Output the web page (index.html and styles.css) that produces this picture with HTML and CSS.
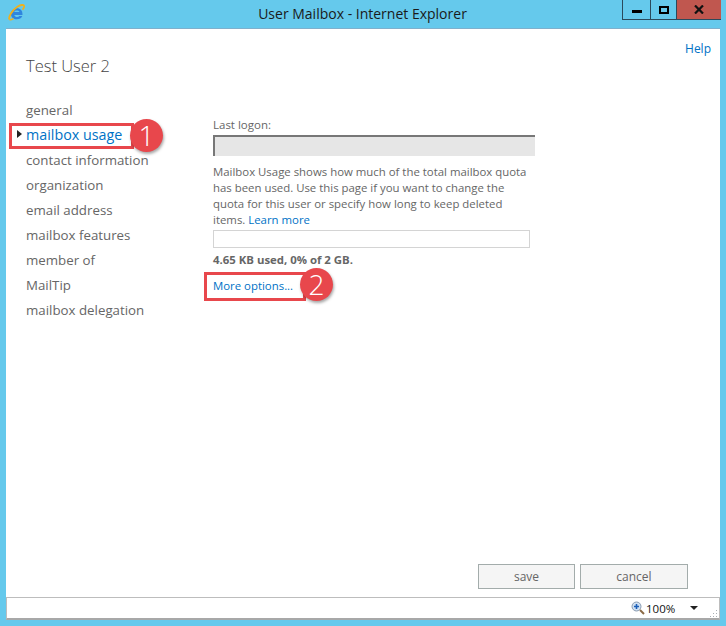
FILE: index.html
```html
<!DOCTYPE html>
<html lang="en">
<head>
<meta charset="utf-8">
<title>User Mailbox - Internet Explorer</title>
<link rel="stylesheet" href="styles.css">
</head>
<body>
<div class="window">
  <header class="titlebar">
    <svg class="ie-logo" viewBox="0 0 20 20" width="17" height="17" aria-hidden="true">
      <path d="M17 11.800c.2-3.700-2.500-6.800-6.500-6.800-4.200 0-7 3.100-7 6.800 0 4.200 3.100 6.200 6.800 6.200 3.100 0 5.600-1.300 6.500-3.900h-3.400c-1.300 1.700-5.200 1.600-6-1.300H17z M7.300 9.400c.9-2.200 5.300-2.200 6.200 0z" fill="#2f86de" fill-rule="evenodd"/>
      <path d="M1.500 18C.5 15 5 7 11 3.200c4-2.400 7.200-2.600 7.800-1.200.6 1.200-.3 3-1.700 4.800" fill="none" stroke="#eeb11f" stroke-width="2.200"/>
      <path d="M1.500 18c.7 1 2.700.5 5-.8" fill="none" stroke="#eeb11f" stroke-width="1.800"/>
    </svg>
    <div class="title">User Mailbox - Internet Explorer</div>
    <div class="controls">
      <div class="ctl ctl-min"><span class="min-glyph"></span></div>
      <div class="ctl ctl-max"><span class="max-glyph"></span></div>
      <div class="ctl ctl-close">
        <svg viewBox="0 0 10 9" width="10" height="9" aria-hidden="true"><path d="M1 .5l8 8M9 .5l-8 8" stroke="#111" stroke-width="2.200"/></svg>
      </div>
    </div>
  </header>

  <main class="page">
    <div class="help-row"><a class="link help">Help</a></div>
    <h1 class="user">Test User 2</h1>
    <div class="columns">
      <nav class="nav">
        <div class="nav-item">general</div>
        <div class="nav-item active"><span class="caret"></span>mailbox usage<span class="mark mark-1"></span><span class="badge badge-1">1</span></div>
        <div class="nav-item">contact information</div>
        <div class="nav-item">organization</div>
        <div class="nav-item">email address</div>
        <div class="nav-item">mailbox features</div>
        <div class="nav-item">member of</div>
        <div class="nav-item">MailTip</div>
        <div class="nav-item">mailbox delegation</div>
      </nav>
      <section class="detail">
        <div class="label">Last logon:</div>
        <div class="readonly"></div>
        <p class="desc">Mailbox Usage shows how much of the total mailbox quota has been used. Use this page if you want to change the quota for this user or specify how long to keep deleted items. <a class="link">Learn more</a></p>
        <div class="usage-bar"></div>
        <div class="usage-text">4.65 KB used, 0% of 2 GB.</div>
        <div class="more"><a class="link">More options...</a><span class="mark mark-2"></span><span class="badge badge-2">2</span></div>
      </section>
    </div>
    <div class="actions">
      <button class="btn btn-save">save</button>
      <button class="btn btn-cancel">cancel</button>
    </div>
  </main>

  <footer class="statusbar">
    <svg class="zoom-icon" viewBox="0 0 14 14" width="14" height="14" aria-hidden="true">
      <circle cx="5.500" cy="5.500" r="4.500" fill="#cfe0f2" stroke="#8a9bb0"/>
      <path d="M3 5.500h5M5.500 3v5" stroke="#1c5fb8" stroke-width="1.600"/>
      <path d="M9 9l4 4" stroke="#8a6a45" stroke-width="2"/>
    </svg>
    <span class="zoom-level">100%</span>
    <span class="zoom-arrow"></span>
    <svg class="grip" viewBox="0 0 9 9" width="9" height="9" aria-hidden="true">
      <path d="M7 1h1v1H7zM4 4h1v1H4zM7 4h1v1H7zM1 7h1v1H1zM4 7h1v1H4zM7 7h1v1H7z" fill="#a9b0b5"/>
    </svg>
  </footer>
</div>
</body>
</html>
```
FILE: styles.css
```css
* { box-sizing: border-box; }
html, body { margin: 0; padding: 0; }
body { font-family: "Open Sans", "Noto Sans", "Liberation Sans", sans-serif; overflow: hidden; }
.window { width: 726px; height: 626px; background: #65c9ec; display: flex; flex-direction: column; padding: 0 6px 6px; }

.titlebar { height: 29px; flex: none; display: flex; align-items: flex-start; border-bottom: 1px solid #7fb0cc; position: relative; }
.ie-logo { position: absolute; left: 2px; top: 4px; }
.title { flex: 1; text-align: center; font-size: 14px; line-height: 28px; color: #1a1a1a; padding-left: 97px; white-space: nowrap; }
.controls { display: flex; height: 20px; border: solid #2b4a5c; border-width: 0 0 1px 1px; margin-right: -1px; }
.ctl { height: 19px; display: flex; align-items: center; justify-content: center; }
.ctl-min { width: 28px; border-right: 1px solid #2b4a5c; }
.ctl-max { width: 26px; border-right: 1px solid #2b4a5c; }
.ctl-close { width: 44px; background: #c0574f; }
.min-glyph { width: 10px; height: 3px; background: #000; margin-top: 4px; }
.max-glyph { width: 10px; height: 8px; border: 2px solid #000; }

.page { flex: 1; background: #fff; display: flex; flex-direction: column; color: #666; min-height: 0; }
.link { color: #0072c6; }
.help-row { display: flex; justify-content: flex-end; padding: 12px 9px 0 0; height: 26px; }
.help { font-size: 12px; line-height: 16px; }
.user { margin: 0; padding: 0 0 0 20px; font-size: 16.500px; line-height: 22px; font-weight: 300; color: #444; height: 42px; }

.columns { display: flex; padding-left: 20px; flex: 1; min-height: 0; }
.nav { width: 187px; flex: none; display: flex; flex-direction: column; padding-top: 1px; }
.nav-item { height: 25px; flex: none; font-size: 13.300px; line-height: 25px; color: #666; white-space: nowrap; position: relative; }
.nav-item.active { color: #0072c6; font-size: 14.300px; line-height: 23px; }
.caret { position: absolute; left: -9px; top: 7px; border-left: 5px solid #222; border-top: 4px solid transparent; border-bottom: 4px solid transparent; }

.mark { position: absolute; border: 3px solid #e8474c; pointer-events: none; }
.badge { position: absolute; width: 33px; height: 33px; border-radius: 50%; background: #e8474c; color: #fff; font-size: 28px; font-weight: 300; line-height: 33px; text-align: center; box-shadow: 1px 2px 3px rgba(0,0,0,.35); }
.mark-1 { left: -17px; top: 0; width: 125px; height: 26px; }
.badge-1 { left: 104px; top: -4px; }

.detail { width: 322px; flex: none; padding-top: 20px; }
.label { font-size: 11.500px; line-height: 16px; color: #666; }
.readonly { height: 21px; margin-top: 2px; background: #e6e6e6; border-top: 2px solid #777; border-left: 2px solid #777; }
.desc { margin: 8px 0 0; font-size: 11.400px; line-height: 16px; color: #666; width: 322px; }
.usage-bar { width: 317px; height: 18px; margin-top: 2px; border: 1px solid #d4d4d4; background: #fff; }
.usage-text { font-size: 11.400px; line-height: 16px; font-weight: 700; color: #666; margin-top: 4px; }
.more { position: relative; font-size: 11.400px; line-height: 16px; margin-top: 10px; }
.mark-2 { left: -9px; top: -6px; width: 102px; height: 29px; }
.badge-2 { left: 87px; top: -10px; }

.actions { display: flex; justify-content: flex-end; gap: 5px; padding: 0 32px 8px 0; }
.btn { height: 25px; font: 12px/1 "Open Sans", "Noto Sans", sans-serif; color: #666; background: #f5f5f5; border: 1px solid #a3acab; padding: 0; }
.btn-save { width: 97px; }
.btn-cancel { width: 108px; }

.statusbar { height: 23px; flex: none; background: #fff; border: 1px solid #bdbdbd; border-bottom: 2px solid #a8a8a8; display: flex; align-items: center; justify-content: flex-end; position: relative; color: #111; font-size: 11.500px; padding-right: 21px; }
.zoom-icon { margin-right: 1px; }
.zoom-level { width: 44px; }
.zoom-arrow { border-top: 4px solid #222; border-left: 4px solid transparent; border-right: 4px solid transparent; }
.grip { position: absolute; right: 1px; bottom: 0; }
```
